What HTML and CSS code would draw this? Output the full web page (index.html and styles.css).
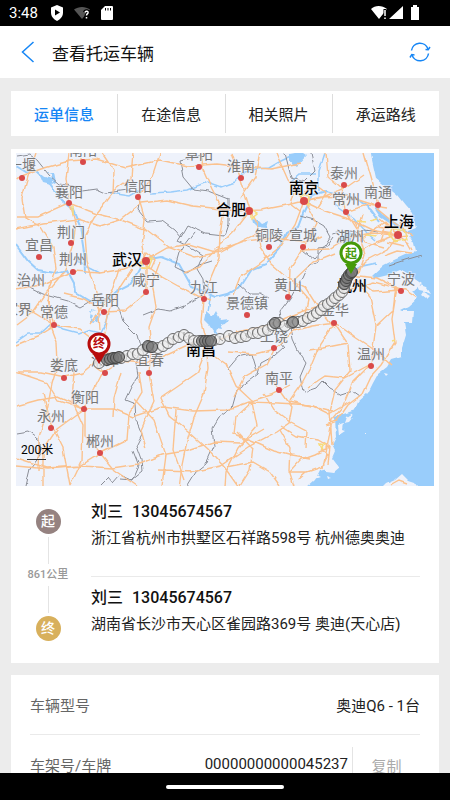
FILE: index.html
```html
<!DOCTYPE html>
<html lang="zh-CN">
<head>
    <meta charset="UTF-8">
    <meta name="viewport" content="width=device-width, initial-scale=1.0">
    <title>查看托运车辆</title>
    <link rel="stylesheet" href="styles.css">
</head>
<body>
    <div class="status-bar">
        <span class="clock">3:48</span>
        <svg class="status-icon" width="14" height="16" viewBox="0 0 14 16"><path fill="#fff" d="M7 0l6 2.500v5c0 4-2.500 6.500-6 8.500-3.500-2-6-4.500-6-8.500v-5z"/><path d="M5 4.500v6l5-3z"/></svg>
        <svg class="status-icon" width="17" height="14" viewBox="0 0 17 14"><path fill="#555" d="M0 3.500C4.500 0 11.500 0 16 3.500L8 13z"/><path fill="none" stroke="#000" stroke-width="4" d="M11 6.500c.5-2 3.500-1.500 3 .5-.3 1-1.500 1-1.500 3v3"/><path fill="none" stroke="#fff" stroke-width="1.500" d="M11 6.500c.5-2 3.500-1.500 3 .5-.3 1-1.500 1-1.500 2.500M12.500 11v1.500"/></svg>
        <svg class="status-icon" width="12" height="14" viewBox="0 0 12 14"><path fill="#fff" d="M4 0h7q1 0 1 1v12q0 1-1 1H1q-1 0-1-1V4z"/><path stroke="#000" d="M4.500 2v2.500M7 2v2.500M9.500 2v2.500"/></svg>
        <span class="spacer"></span>
        <svg width="50" height="16" viewBox="0 0 50 16"><path fill="#fff" d="M1 4C5 0 12 0 17 4L9 14zM33 1v13H19zM41 2h2V0h4v2h2v13h-8V2z"/><path stroke="#000" stroke-width="3" d="M15 4v12"/><path stroke="#fff" stroke-width="1.500" d="M15 5v6M15 12.500V14"/></svg>
    </div>

    <header class="header">
        <button class="icon-btn" aria-label="返回">
            <svg width="14" height="22" viewBox="0 0 14 22"><path class="icon-line" d="M12.500 1L1.500 11l11 10"/></svg>
        </button>
        <h1>查看托运车辆</h1>
        <button class="icon-btn refresh" aria-label="刷新">
            <svg width="22" height="20" viewBox="0 0 22 20"><path class="icon-line" d="M2.500 8.500A8.500 8.500 0 0 1 19 7M19.500 11.500A8.500 8.500 0 0 1 3 13"/><path class="icon-line" d="M16.500 7.500l2.700.2L21 5M1 15.500l1.800-3 2.700.5"/></svg>
        </button>
    </header>

    <main class="content">
        <nav class="tabs">
            <button class="tab active">运单信息</button>
            <button class="tab">在途信息</button>
            <button class="tab">相关照片</button>
            <button class="tab">承运路线</button>
        </nav>

        <section class="card waybill">
            <svg class="map" viewBox="16 153 418 333" role="img" aria-label="运输轨迹">
                <defs>
                    <filter id="rough" filterUnits="userSpaceOnUse" x="0" y="137" width="450" height="365">
                        <feTurbulence type="fractalNoise" baseFrequency="0.08" numOctaves="2" seed="4"/>
                        <feDisplacementMap in="SourceGraphic" scale="4" xChannelSelector="R" yChannelSelector="G"/>
                    </filter>
                    <marker id="stop" markerUnits="userSpaceOnUse" markerWidth="14" markerHeight="14" refX="7" refY="7">
                        <circle cx="7" cy="7" r="5.500" fill="#eee" fill-opacity=".75" stroke="#6c6c6c"/>
                        <path d="M7 4v3l3 2" fill="none" stroke="#999"/>
                    </marker>
                    <marker id="stop-dark" markerUnits="userSpaceOnUse" markerWidth="14" markerHeight="14" refX="7" refY="7">
                        <circle cx="7" cy="7" r="5.500" fill="#777" fill-opacity=".7" stroke="#444"/>
                    </marker>
                    <g id="city"><circle r="3"/><circle class="core" r="1.500"/></g>
                    <g id="capital"><circle r="4"/><circle class="ring" r="2.500"/><circle r="1.500"/></g>
                </defs>

                <rect class="land" x="16" y="153" width="418" height="333"/>

                <g filter="url(#rough)">
                    <path class="sea" d="M369 140L372 160L376 178L388 188L397 195L405 205L412 213L416 228L408 231L395 222L382 214L378 208L374 208L380 217L394 226L408 233L414 243L416 252L405 255L394 260L384 265L372 276L376 278L388 275L400 270L409 275L422 284L413 292L418 298L408 307L400 311L414 311L413 323L404 323L406 335L402 348L402 357L391 360L387 367L378 374L373 383L368 393L358 402L355 410L335 417L336 437L332 445L335 451L332 458L338 466L320 470L315 480L306 488L306 500H450V140z"/>
                    <path class="land" d="M380 490L386 484L395 480L402 474L408 480L414 482L420 490zM346 417l6-4-3 6 4-2-4 5-5 1zM338 425l5-2-1 7 3 1-6 4zM417 284l9 3 4 6-5-2-5-1zM424 292l5 3-3 3-4-3zM405 312l4 4-4 5zM326 467l10-3 4 4-6 5-8-1zM314 474l6 3-6 2zM384 373l4 1-2 2zM326 476l5 2-4 1zM365 433h1v1h-1z"/>
                    <path class="water" d="M101 318l-4-6-8-1 4 6-3 5 6 1-2-9M40 176l14 3-3 6-8-2zM46 172l6 2 0 10 4-2-2-10M206 311l7 6 3-5 4 8 8-1-3 5-5 1 2 5-5-1-2 5-6-9-5-5zM251 218l6 1 5 5 7-3-2 7-10-1-5-5zM345 233l8 1-3 8-8 2-1-7zM290 154l10-2 6 4-9 10-7-5zM91 310l10 4-3 9-8-4z"/>
                    <path class="river" d="M16 166l10 6 10-1 14 13 12 16 11 9 7 17 4 26 1 22M16 245l12 16 10 9 17 3 12-3 7 13 1 9 17 10 14-1 10-9 12-6 10-14 7-12 16-3 18 7 13 23 23 10 12-3 14-8 11-17 14-5 13-15 8-16 11-6 6-16 8-16 14-4 13 3 12 3 9 4 11 9 9 12"/>
                    <path class="river thin" d="M150 193l20-1 17-2 20-8 14 5 14-5 8-9 13-4 13-1 12-7 17-8M16 342l13-9 12 0 10-9 12 6 15 4 10-4 13 3 6-12 2-8M218 336l-8-14M208 311l3-18-5-9M77 262l9 4 14 7M110 193l20 3 12-7M325 153l-6 18 0 20M335 205l20 14 12 14 8 7M291 181l8-7 17 0M350 272l12-6 14-3"/>
                </g>

                <g class="borders" filter="url(#rough)">
                    <path d="M16 157l14-2 7 5 12 15 10 9 14 2 9 5 15-2 9 4 22-3 13 3-3 17 10 12 14-1 12 9 7 8 7-12 18 8 18 2 4-12 0-25-20-8-15-2-10-12-3-16 16-4 10-4M194 232l-10 13-5 8-4 14 12 6 12-8 13-4M183 232l-6 9 17 8 9 6-6 14 6 10 1 15-20 12-13 5-13-2-15 6M18 282l25 12 25 7 12 6 14-8 16 0 8 8 5 14 14 14 4 15-5 14 2 12-7 11-6 13 10 4 1 16 6 14-6 12 5 14 1 12-10 8-12-5-7 8-5-6-7 7M16 434l12-2 12 9 0 15-10 13-4 17M133 451l6 15-6 14-13-1M285 153l6 24 14 4 10-10-4-18M303 250l11 9 8-9 8-13-6-11-10-6-14-4M333 237l-7 10-8 1 0 14-10 5-5 11-7 9-6 11-10 13 2 13-6 13 8 10-10 9-13 7-3 11-13 10-8 6-5 18-14 10-6 10 2 18-8 18-10 8-8 13-4 15-6 16M304 392l12-4 6-7 8 8 11 6 12-4 7 5M290 322l3 18 5 11 8 12-6 14 3 14M257 371l-5-17-14 3-11 13M239 284l10 9 12 0 8 5M332 234l12-3 12 2 8-3 14 2M390 265l15-5 17-5"/>
                </g>

                <g class="roads" filter="url(#rough)">
                    <path d="M36 153l-7 20-7 25 3 20 16 9 12 20 3 22-7 18-1 20 3 19 6 16 1 22-6 20-5 26-8 27-1 34M16 178l25-9 28-8 27-2 30 9 34-8 27 6 30-2 26 3 28 2 30-6M16 217l22 0 31-14 28 11 24 6 26 10 23 18 25 9 26-5 23-12 22-11M69 153l-3 27 4 24 6 20-3 20-9 28-17 20-14 20-16 12M102 153l12 18-1 22-19 25-9 17 2 26 7 22 4 19 2 28M133 153l-2 25-18 13M160 153l-8 25-14 18 7 24-3 26 4 19 16 12 16 9 20 10 13 4M16 289l25-4 33-14 26 2 24-4 22-9 21-12 22-4 26 8 29-11 30-3 31 4 17-5"/>
                    <path d="M16 229l28-6 34-4 22 7 19-6 22-17 26-3 26 6 20 2 23 3 25-1 31-6 28-7 26-1 25 8 22 18 20 14M201 153l2 16 9 20 12 22-4 22-1 25-10 24-6 18-2 22 5 20 2 25-4 27-10 23-7 24-5 24-5 40M232 153l8 24 10 33 7 14 3 23 11 17 16 14 18 9 14 22 16 20M249 211l-15 20-19 19-15 17-16 6M260 153l-5 24-14 20M276 153l12 27 16 21-9 24-14 21-22 18-19 13-7 18M326 153l2 23 14 12 3 22 14 22 6 23-6 18M303 201l20-4 24-10 17-12M304 201l21 10 22 7 25 12 26 5 10 8 4 7M345 212l22-7 20 3M378 205l-6-24-8-28M372 230l14-8 13 13-12 15-19 10-19 18M398 235l-27-2-24 5-18 11-27 1M353 256l21-13 24-9-18-15M304 201l12 22-12 24-14 22-1 28"/>
                    <path d="M16 345l22-9 17-10 24 3 21 16 17 16 29 2 23-9 26-12 14 2 29-12 31-7 24-10 28-10 24-14 29-9 31 8 12 8M16 372l25 0 24 5 18-4 18-15 4-24 4-24 11-23 12-18M54 325l-23-14-15-6M54 325l-7-25M104 312l-20-13-20-5M104 312l21-1 22-18 0-31M160 262l-8 21 4 24-7 20 2 22-2 25 5 27-13 29 5 18M119 268l-7 23-21 33M16 406l22-6 20-3 26 12 30 0 19 8 30-10 30 4 34-1 22-8 29 1 33 2 18 9 21-12M84 409l-26-8-12-19-30-10M85 409l0 27 16 17-21 13-33 2-31-10M84 409l18-35M84 409l-27 20-14 21 0 36M100 453l27-13 2-26 13-22-3-20M100 453l14 17 23 16M43 393l8 31 12 24 7 38M74 372l-2 29 11 24-1 36-12 25M16 466l32 3 34-3 30 2 27-4 22-9 24-4 28-9 27 1 24-14M121 373l-7 25-1 19"/>
                    <path d="M206 350l-9 23-20 14-16 11 9 19 18 14 20 18 17 19 14 20M206 350l20 14 10 22 16 15 5 25-19 22-12 24-1 14M228 352l27 2 19-5 20-18 18-5 23-3 20 14 21 14 16 15M162 485l4-30-12-35-20-21M176 410l-3 40 11 30M275 348l-8 16-23 13-10 20M290 385l-19 10-17 5-18 17-2 17 22 9 18 8 18 5 18 3M264 394l10 16 17 13 15 8-1 17M304 324l5-25-16-18 20-19 22-9M334 323l-14 21-9 22-9 17-12 17M334 323l14 21 2 27-15 19-5 21 2 35M350 275l20 22 6 28-5 39-18 18-11 26-10 12-5 28-4 20M350 275l27 3 20 10-5 31 3 24-14 22-11 12-8 17-14 11-11 16-11 4M401 290l-27 2-18-13M378 325l15-14 3-25M348 343l-25 5-14 2M371 364l-26 14-20-2-18 12M280 390l12 17-3 16-13 9-28 15-28 19-23 5-39-1M280 390l-14-17M288 401l20 4 25 6M280 426l16 10 22 4 12 7M280 430l10 18-1 22 5 16M253 448l-3 22-10 16M330 447l-15 7-14 5-12 13 18 0 15-5 6-12-7-6M330 447l-2 17M227 467l26-5 17 10 10 14M306 472l-8 7M237 432l16 17"/>
                    <path d="M390 485l9-5 8 3M384 256l13-5 15 2M355 222l10 20 19 5M363 214l-5 18M348 250l15-1M300 211l-9-7 3-11M304 193l12-8 10 8-9 14M146 253l9 7-4 9-11-3zM97 357l13-3 4 12-10 7-8-6zM360 240l17-13 17 2M381 241l6-18M400 223l4 8M399 236l8-1M405 246l-18-4"/>
                </g>
                <g class="urban" filter="url(#rough)">
                    <path d="M392 229l12 0 3 10-12 3-5-7zM142 261l10-2-3 8-7 0zM251 209l6 4-6 5zM301 195l8 2-1 8-6-3zM366 235l12 1M320 444l5 1-3 4zM358 221l7 1M370 221l8-2M73 206v8M392 342l3-1"/>
                </g>

                <g class="dots">
                    <use href="#city" x="83" y="162"/><use href="#city" x="22" y="178"/><use href="#city" x="69" y="203"/>
                    <use href="#city" x="138" y="197"/><use href="#city" x="71" y="243"/><use href="#city" x="39" y="257"/>
                    <use href="#city" x="199" y="167"/><use href="#city" x="241" y="178"/><use href="#city" x="269" y="247"/>
                    <use href="#city" x="344" y="185"/><use href="#city" x="346" y="212"/><use href="#city" x="378" y="205"/>
                    <use href="#city" x="303" y="247"/><use href="#city" x="73" y="272"/><use href="#city" x="146" y="292"/>
                    <use href="#city" x="104" y="312"/><use href="#city" x="54" y="325"/><use href="#city" x="105" y="373"/>
                    <use href="#city" x="149" y="373"/><use href="#city" x="204" y="299"/><use href="#city" x="288" y="297"/>
                    <use href="#city" x="247" y="315"/><use href="#city" x="274" y="348"/><use href="#city" x="279" y="390"/>
                    <use href="#city" x="334" y="323"/><use href="#city" x="401" y="291"/><use href="#city" x="371" y="366"/>
                    <use href="#city" x="64" y="378"/><use href="#city" x="84" y="409"/><use href="#city" x="51" y="428"/>
                    <use href="#city" x="100" y="453"/>
                    <use href="#capital" x="146" y="261"/><use href="#capital" x="249" y="211"/>
                    <use href="#capital" x="304" y="201"/><use href="#capital" x="398" y="235"/>
                </g>

                <g class="labels">
                    <text x="83" y="155">南阳</text><text x="22" y="170">十堰</text><text x="69" y="197">襄阳</text>
                    <text x="138" y="191">信阳</text><text x="71" y="237">荆门</text><text x="39" y="250">宜昌</text>
                    <text x="73" y="264">荆州</text><text x="199" y="159">阜阳</text><text x="241" y="171">淮南</text>
                    <text x="344" y="178">泰州</text><text x="346" y="204">常州</text><text x="378" y="197">南通</text>
                    <text x="303" y="240">宣城</text><text x="269" y="240">铜陵</text><text x="350" y="241">湖州</text>
                    <text x="31" y="285">治州</text><text x="18" y="314">家界</text><text x="54" y="317">常德</text>
                    <text x="105" y="305">岳阳</text><text x="146" y="285">咸宁</text><text x="204" y="292">九江</text>
                    <text x="288" y="290">黄山</text><text x="247" y="308">景德镇</text><text x="274" y="341">上饶</text>
                    <text x="279" y="383">南平</text><text x="335" y="315">金华</text><text x="401" y="284">宁波</text>
                    <text x="371" y="359">温州</text><text x="64" y="370">娄底</text><text x="150" y="365">宜春</text>
                    <text x="105" y="365">湘潭</text><text x="85" y="402">衡阳</text><text x="51" y="421">永州</text>
                    <text x="100" y="446">郴州</text>
                </g>
                <g class="labels major">
                    <text x="127" y="265">武汉</text><text x="231" y="215">合肥</text><text x="304" y="193">南京</text>
                    <text x="399" y="227">上海</text><text x="201" y="355">南昌</text><text x="352" y="291">杭州</text>
                </g>

                <polyline class="track" points="98,363 99,363 115,358 121,358 127,356 133,354 138,354 143,350 149,347 158,348 163,346 168,343 173,339 179,337 184,335 189,338 194,341 199,341 214,340 220,339 229,336 235,338 241,337 246,336 253,333 258,333 263,331 268,330 273,325 279,323 285,326 292,323 298,322 303,321 308,318 313,316 317,313 321,310 324,306 328,304 332,301 335,298 339,295 342,292 344,288 345,284 345,284"/>
                <polyline class="track-dark" points="0,0 107,360 110,359 113,358 116,358 119,357 148,346 152,347 202,341 205,341 208,341 211,341 275,323 293,322 344,284 346,281 347,278 349,275 351,273 352,272 0,0"/>

                <g class="pin pin-start">
                    <path d="M351 274l-6-10h12z"/>
                    <circle cx="351" cy="253" r="10"/>
                    <text x="351" y="258">起</text>
                </g>
                <g class="pin pin-end">
                    <path d="M99 364l-6-10h12z"/>
                    <circle cx="99" cy="344" r="10"/>
                    <text x="99" y="348">终</text>
                </g>

                <text class="scale-text" x="21" y="454">200米</text>
                <path class="scale-line" d="M27 459.500h19"/>
            </svg>

            <div class="route">
                <div class="route-line">
                    <span class="badge start">起</span>
                    <span class="line"></span>
                    <span class="distance">861公里</span>
                    <span class="line"></span>
                    <span class="badge end">终</span>
                </div>
                <div class="stops">
                    <div class="stop">
                        <p class="contact"><span>刘三</span><span>13045674567</span></p>
                        <p class="address">浙江省杭州市拱墅区石祥路598号 杭州德奥奥迪</p>
                    </div>
                    <div class="stop">
                        <p class="contact"><span>刘三</span><span>13045674567</span></p>
                        <p class="address">湖南省长沙市天心区雀园路369号 奥迪(天心店)</p>
                    </div>
                </div>
            </div>
        </section>

        <section class="card vehicle">
            <div class="row">
                <span class="label">车辆型号</span>
                <span class="value">奥迪Q6 - 1台</span>
            </div>
            <div class="row">
                <span class="label">车架号/车牌</span>
                <span class="value">00000000000045237</span>
                <button class="copy">复制</button>
            </div>
        </section>
    </main>

    <div class="nav-bar"><span class="handle"></span></div>
</body>
</html>
```
FILE: styles.css
```css
* {
    box-sizing: border-box;
}
body {
    margin: 0;
    height: 100vh;
    display: flex;
    flex-direction: column;
    background-color: #ececec;
    color: #222;
    font-family: Roboto, "Noto Sans CJK SC", sans-serif;
    font-size: 15px;
}
button {
    border: none;
    background: none;
    padding: 0;
    font: inherit;
    color: inherit;
    cursor: pointer;
}
p, h1 {
    margin: 0;
}
.status-bar {
    flex: none;
    height: 26px;
    padding: 0 30px 0 9px;
    display: flex;
    align-items: center;
    background-color: #000;
    color: #fff;
}
.clock {
    margin-right: 12px;
    font-size: 15px;
}
.status-icon {
    margin-right: 10px;
}
.spacer {
    flex: 1;
}
.header {
    flex: none;
    height: 52px;
    padding: 0 19px 0 21px;
    display: flex;
    align-items: center;
    background-color: #fff;
    color: #111;
}
.header h1 {
    margin-left: 17px;
    font-size: 17px;
    font-weight: 400;
}
.icon-btn {
    display: flex;
}
.refresh {
    margin-left: auto;
}
.icon-line {
    fill: none;
    stroke: #1686f5;
    stroke-width: 1.5;
}
.content {
    flex: 1;
    min-height: 0;
    overflow: hidden;
    padding: 13px 11px 0;
}
.tabs {
    display: flex;
    height: 45px;
    padding: 3px 0;
    background-color: #fff;
}
.tab {
    flex: 1;
    border-right: 1px solid #ddd;
}
.tab:last-child {
    border-right: none;
}
.tab.active {
    color: #1686f5;
    font-weight: 500;
}
.card {
    background-color: #fff;
}

/* waybill */
.waybill {
    margin-top: 13px;
    padding: 4px 5px 0;
}
.map {
    display: block;
    width: 100%;
}
.land {
    fill: #eef2fb;
}
.sea, .water {
    fill: #99cdfb;
}
.river {
    fill: none;
    stroke: #99cdfb;
    stroke-width: 2;
}
.river.thin {
    stroke-width: 1.5;
}
.borders {
    fill: none;
    stroke: #8b8e96;
    stroke-width: 1;
}
.roads {
    fill: none;
    stroke: #fbc28e;
    stroke-width: 1.4;
}
.urban {
    fill: none;
    stroke: #f8dc7c;
    stroke-width: 1.5;
}
.dots {
    fill: #d94a4a;
}
.dots .core {
    fill: #f08b8b;
}
.dots .ring {
    fill: #fff;
}
.labels {
    fill: #777;
    stroke: #eef2fb;
    stroke-width: 2;
    stroke-opacity: 0.6;
    paint-order: stroke;
    font-size: 14px;
    text-anchor: middle;
}
.labels.major {
    fill: #000;
    font-size: 15px;
    font-weight: 500;
}
.track, .track-dark {
    fill: none;
    stroke: none;
}
.track {
    marker-mid: url(#stop);
}
.track-dark {
    marker-mid: url(#stop-dark);
}
.pin circle {
    fill: #fff;
    stroke-width: 3;
}
.pin text {
    font-size: 12px;
    font-weight: 700;
    text-anchor: middle;
}
.pin-start {
    fill: #459a08;
}
.pin-start circle {
    stroke: #459a08;
}
.pin-end {
    fill: #b80c0c;
}
.pin-end circle {
    stroke: #b80c0c;
}
.scale-text {
    font-size: 12px;
}
.scale-line {
    stroke: #333;
}
.route {
    display: flex;
    padding: 13px 14px 22px 0;
}
.route-line {
    flex: none;
    width: 64px;
    margin-right: 11px;
    padding: 10px 0 0;
    display: flex;
    flex-direction: column;
    align-items: center;
}
.badge {
    width: 25px;
    height: 25px;
    border-radius: 50%;
    color: #fff;
    font-size: 14px;
    font-weight: 500;
    line-height: 24px;
    text-align: center;
}
.badge.start {
    background-color: #958280;
}
.badge.end {
    background-color: #d8b05c;
}
.line {
    width: 1px;
    height: 27px;
    margin: 3px 0;
    background-color: #e4e4e4;
}
.distance {
    color: #999;
    font-size: 11px;
    font-weight: 500;
    line-height: 16px;
}
.stops {
    flex: 1;
}
.stop {
    height: 77px;
}
.stop + .stop {
    height: 65px;
    padding-top: 8px;
    border-top: 1px solid #eaeaea;
}
.contact {
    display: flex;
    gap: 9px;
    color: #111;
    font-size: 16px;
    font-weight: 500;
    line-height: 26px;
}
.address {
    line-height: 26px;
    white-space: nowrap;
}

/* vehicle */
.vehicle {
    margin-top: 12px;
    padding: 0 19px;
}
.row {
    display: flex;
    align-items: center;
    height: 59px;
}
.row + .row {
    border-top: 1px solid #eaeaea;
}
.label {
    color: #666;
}
.value {
    margin-left: auto;
    color: #222;
}
.copy {
    align-self: stretch;
    width: 68px;
    margin: 12px 0 0 4px;
    padding-bottom: 10px;
    border-left: 1px solid #e4e4e4;
    color: #aaa;
}

.nav-bar {
    flex: none;
    height: 27px;
    display: flex;
    align-items: center;
    justify-content: center;
    background-color: #000;
}
.handle {
    width: 118px;
    height: 4px;
    border-radius: 2px;
    background-color: #fff;
}
```
